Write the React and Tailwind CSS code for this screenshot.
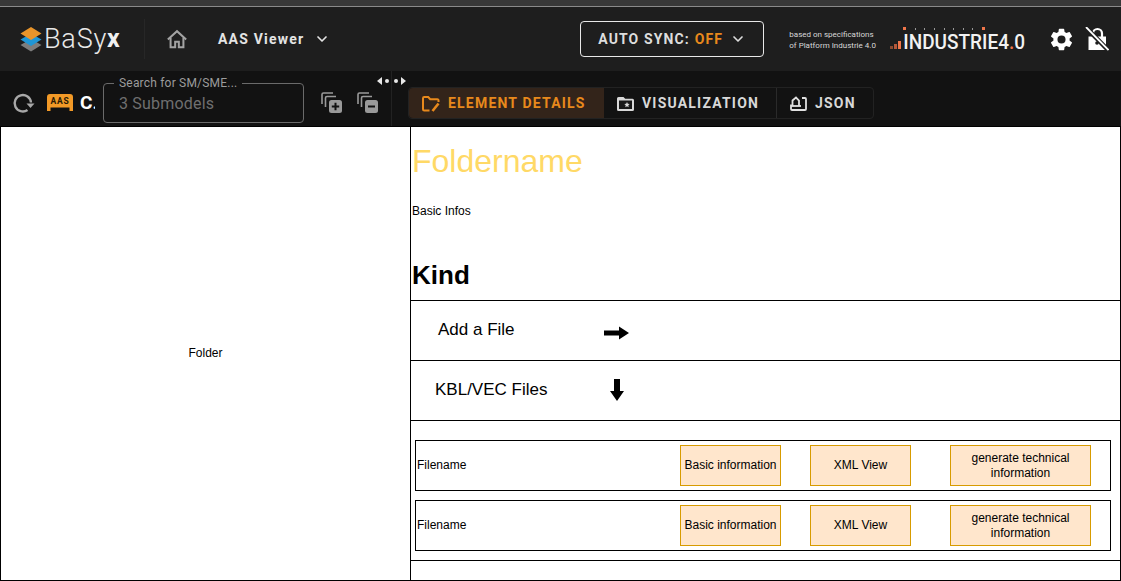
import React from "react";
import { ChevronDown } from "lucide-react";

function LogoMark() {
  return (
    <svg width="22" height="25" viewBox="0 0 22 25" className="shrink-0">
      <path d="M11 12 L21.500 18 L11 24.500 L0.500 18Z" fill="#7d7d7d" />
      <path d="M11 6.500 L21.500 12.500 L11 19 L0.500 12.500Z" fill="#1f96d6" />
      <path d="M11 0 L21.500 6.500 L11 13 L0.500 6.500Z" fill="#e8942a" />
    </svg>
  );
}

function Home() {
  return (
    <svg width="22" height="22" viewBox="0 0 24 24" fill="none" stroke="#a3a3a3" strokeWidth="2.2">
      <path d="M2 12.500 12 3.500l10 9" />
      <path d="M5 10.500V21h5v-6h4v6h5V10.500" />
    </svg>
  );
}

function Gear() {
  return (
    <svg width="27" height="27" viewBox="0 0 24 24" fill="#fff">
      <path d="M19.140 12.940c.04-.3.06-.61.06-.94s-.02-.64-.07-.94l2.030-1.580a.49.49 0 0 0 .12-.61l-1.920-3.320a.49.49 0 0 0-.59-.22l-2.390.96a7 7 0 0 0-1.620-.94l-.36-2.540a.48.48 0 0 0-.48-.41h-3.840a.48.48 0 0 0-.47.41l-.36 2.540c-.59.24-1.130.57-1.620.94l-2.390-.96a.48.48 0 0 0-.59.22L2.740 8.870a.48.48 0 0 0 .12.61l2.030 1.580c-.05.3-.09.63-.09.94s.02.64.07.94l-2.030 1.580a.49.49 0 0 0-.12.61l1.920 3.320c.12.22.37.29.59.22l2.390-.96c.5.38 1.030.7 1.620.94l.36 2.540c.05.24.24.41.48.41h3.840c.24 0 .44-.17.47-.41l.36-2.540c.59-.24 1.130-.56 1.620-.94l2.390.96c.22.08.47 0 .59-.22l1.920-3.320a.48.48 0 0 0-.12-.61l-2.010-1.580zM12 15.600A3.600 3.600 0 1 1 12 8.400a3.600 3.600 0 0 1 0 7.200z" />
    </svg>
  );
}

function LockOff() {
  return (
    <svg width="24" height="24" viewBox="0 0 24 24">
      <path d="M8 10V6.500a4.500 4.500 0 0 1 9 0V10" fill="none" stroke="#fff" strokeWidth="2.200" />
      <path d="M3.500 9.500h17.500V23H3.500z" fill="#fff" />
      <circle cx="12" cy="16" r="1.800" fill="#1e1e1e" />
      <path d="M1 0.500 24 24" stroke="#1e1e1e" strokeWidth="4.500" />
      <path d="M1 0 23.500 23" stroke="#fff" strokeWidth="1.800" />
    </svg>
  );
}

function Refresh() {
  return (
    <svg width="24" height="24" viewBox="0 0 24 24" fill="none" stroke="#a8a8a8" strokeWidth="2.400">
      <path d="M20 11.500A8.200 8.200 0 1 0 16.500 19" />
      <path d="M15.500 12.500h8l-4 4.500z" fill="#a8a8a8" stroke="none" />
    </svg>
  );
}

function AasBadge() {
  return (
    <svg width="26" height="17" viewBox="0 0 26 17">
      <path d="M3 0h20a3 3 0 0 1 3 3v14h-3.500v-3.500h-19V17H0V3a3 3 0 0 1 3-3z" fill="#f39a27" />
      <text x="13" y="10" textAnchor="middle" fontSize="8.500" fontWeight="700" letterSpacing="0.8" fill="#2a1a05" fontFamily="Roboto, sans-serif">AAS</text>
    </svg>
  );
}

function Stack({ minus }) {
  return (
    <svg width="22" height="22" viewBox="0 0 22 22" fill="none" stroke="#9a9a9a" strokeWidth="1.600">
      <path d="M1 12V2.500A1.500 1.500 0 0 1 2.500 1H12" />
      <path d="M4.500 15V6A1.500 1.500 0 0 1 6 4.500h9" />
      <rect x="8" y="8" width="13" height="13" rx="2.500" fill="#9a9a9a" stroke="none" />
      {minus ? (
        <path d="M11 14.500h7" stroke="#121212" strokeWidth="2" />
      ) : (
        <path d="M10.800 14.500h7.400M14.500 10.800v7.400" stroke="#121212" strokeWidth="2" />
      )}
    </svg>
  );
}

function FolderEdit() {
  return (
    <svg width="18" height="16" viewBox="0 0 18 16" fill="none" stroke="#e8891c" strokeWidth="2">
      <path d="M7.500 14.500H2.200A1.200 1.200 0 0 1 1 13.300V2.200A1.200 1.200 0 0 1 2.200 1h4l2 2.200h7A1.200 1.200 0 0 1 16.500 4.400V6" />
      <path d="M16.500 7.500 10.500 15" strokeWidth="2.600" />
    </svg>
  );
}

function FolderStar() {
  return (
    <svg width="17" height="14" viewBox="0 0 17 14">
      <path d="M1.500 0h5l1.700 1.800h7.300A1.500 1.500 0 0 1 17 3.300V12.500a1.500 1.500 0 0 1-1.500 1.500h-14A1.500 1.500 0 0 1 0 12.500v-11A1.500 1.500 0 0 1 1.500 0z" fill="#d8d8d8" />
      <path d="M2 3.500h13V12H2z" fill="#181818" />
      <path d="M10 5l.8 1.800 1.900.2-1.400 1.300.4 1.900-1.700-1-1.700 1 .4-1.900L7.300 7l1.900-.2z" fill="#d8d8d8" />
    </svg>
  );
}

function JsonIcon() {
  return (
    <svg width="17" height="15" viewBox="0 0 17 15" fill="none" stroke="#e0e0e0" strokeWidth="1.800">
      <path d="M1 8.500v4.500A1 1 0 0 0 2 14h13a1 1 0 0 0 1-1V3a1 1 0 0 0-1-1h-3" />
      <path d="M2.500 10V4.500L6 1.500l3 3V10" />
      <path d="M1 10h10" />
    </svg>
  );
}

function Industrie() {
  return (
    <div className="flex items-end h-[24px] ml-[15px] mt-[4px]">
      <div className="flex items-end gap-[1px] mb-[4px] mr-[2px]">
        <span className="block w-[3px] h-[3px] bg-[#8a4a30]" />
        <span className="block w-[3px] h-[5px] bg-[#b5583a]" />
        <span className="block w-[3px] h-[8px] bg-[#f0764a]" />
      </div>
      <div className="relative">
        <span className="absolute -top-[4px] left-0 right-[40px] flex justify-between items-center">
          <span className="block w-[3px] h-[3px] bg-[#f0764a]" />
          {"LATTFOR".split("").map((c, i) => (
            <span key={i} className="block w-[1px] h-[2px] bg-[#999999]" />
          ))}
          <span className="block w-[3px] h-[3px] bg-[#f0764a]" />
        </span>
        <span className="block font-['Roboto',sans-serif] font-medium text-[19px] leading-[22px] text-[#f2f2f2] whitespace-nowrap scale-y-[1.1]">
          INDUSTRIE4<span className="text-[#f0764a]">.</span>0
        </span>
      </div>
    </div>
  );
}

function FileRow() {
  return (
    <div className="h-[51px] ml-[4px] mr-[9px] border border-black flex items-center text-[12px] leading-[15px] text-black">
      <span className="w-[264px] pl-[1px] shrink-0">Filename</span>
      <div className="w-[101px] h-[41px] shrink-0 border border-[#d79b00] bg-[#ffe6cc] flex items-center justify-center text-center whitespace-nowrap">Basic information</div>
      <div className="w-[101px] h-[41px] ml-[29px] shrink-0 border border-[#d79b00] bg-[#ffe6cc] flex items-center justify-center text-center">XML View</div>
      <div className="w-[141px] h-[41px] ml-[39px] shrink-0 border border-[#d79b00] bg-[#ffe6cc] flex items-center justify-center text-center">generate technical<br />information</div>
    </div>
  );
}

export default function App() {
  return (
    <div className="w-[1121px] h-[581px] overflow-hidden flex flex-col bg-white font-['Liberation_Sans',Arial,sans-serif]">
      <div className="h-[7px] bg-[#383838] border-b border-[#8a8a8a] shrink-0" />
      <header className="h-[64px] shrink-0 bg-[#1e1e1e] flex items-center font-['Roboto',sans-serif]">
        <div className="ml-[20px] w-[125px] h-[40px] flex items-center border-r border-[#272727]">
          <LogoMark />
          <span className="ml-[2px] text-[27px] leading-[30px] font-light text-[#e8e8e8] tracking-[0.8px]">BaSy</span>
          <span className="text-[25px] leading-[30px] font-bold text-[#f0f0f0]">x</span>
        </div>
        <div className="ml-[21px]"><Home /></div>
        <span className="ml-[30px] text-[14px] font-bold text-[#e4e4e4] tracking-[1.2px] whitespace-nowrap">AAS Viewer</span>
        <ChevronDown size={16} strokeWidth={2.5} color="#e4e4e4" className="ml-[10px]" />
        <div className="ml-[250px] w-[184px] h-[36px] rounded-[4px] border border-[#e8e8e8] flex items-center pl-[17px] text-[14px] font-bold tracking-[1.1px] text-[#dddddd] whitespace-nowrap">
          AUTO SYNC:<span className="ml-[5px] text-[#e8891c]">OFF</span>
          <ChevronDown size={16} strokeWidth={2.5} color="#dddddd" className="ml-[7px]" />
        </div>
        <div className="ml-[25px] mt-[2px] w-[86px] text-[8px] leading-[11px] font-normal text-[#d8d8d8] whitespace-nowrap">
          based on specifications<br />of Platform Industrie 4.0
        </div>
        <Industrie />
        <div className="ml-[23px] flex items-center"><Gear /></div>
        <div className="ml-[10px] flex items-center"><LockOff /></div>
      </header>
      <div className="h-[55px] shrink-0 bg-[#121212] flex font-['Roboto',sans-serif] relative">
        <div className="w-[392px] shrink-0 flex items-center border-r border-[#222222] pt-[9px]">
          <div className="ml-[11px]"><Refresh /></div>
          <div className="ml-[12px] mt-[-2px]"><AasBadge /></div>
          <span className="ml-[7px] w-[15px] text-[19px] font-bold text-white overflow-hidden whitespace-nowrap">C.</span>
          <div className="ml-[8px] relative w-[201px] h-[40px] rounded-[4px] border border-[#6a6a6a] flex items-center pl-[15px] pt-[1px] text-[16px] text-[#6f6f6f] tracking-[0.2px]">
            3 Submodels
            <span className="absolute -top-[8px] left-[10px] px-[5px] bg-[#121212] text-[12px] leading-[14px] text-[#9c9c9c] whitespace-nowrap">Search for SM/SME...</span>
          </div>
          <div className="ml-[17px]"><Stack /></div>
          <div className="ml-[14px]"><Stack minus /></div>
        </div>
        <div className="absolute left-[377px] top-[6px] flex items-center h-[8px]">
          <span className="block w-0 h-0 border-y-[4px] border-y-transparent border-r-[5px] border-r-[#e8e8e8]" />
          <span className="block w-[4px] h-[4px] rounded-full bg-[#e8e8e8] ml-[3px]" />
          <span className="block w-[4px] h-[4px] rounded-full bg-[#e8e8e8] ml-[5px]" />
          <span className="block w-0 h-0 ml-[3px] border-y-[4px] border-y-transparent border-l-[5px] border-l-[#e8e8e8]" />
        </div>
        <div className="ml-[16px] mt-[16px] h-[32px] w-[466px] rounded-[4px] border border-[#222222] flex text-[14px] font-bold tracking-[1.2px] text-[#d8d8d8] whitespace-nowrap">
          <div className="w-[195px] bg-[#33241a] rounded-l-[4px] flex items-center pl-[13px] pt-[1px] text-[#e8891c]">
            <FolderEdit />
            <span className="ml-[8px]">ELEMENT DETAILS</span>
          </div>
          <div className="w-[173px] border-r border-[#2a2a2a] flex items-center pl-[13px] pt-[1px]">
            <FolderStar />
            <span className="ml-[8px]">VISUALIZATION</span>
          </div>
          <div className="flex-1 flex items-center pl-[13px] pt-[1px]">
            <JsonIcon />
            <span className="ml-[8px]">JSON</span>
          </div>
        </div>
      </div>
      <main className="flex-1 min-h-0 flex border border-black text-black">
        <div className="w-[410px] shrink-0 border-r border-black flex items-center justify-center text-[12px] pb-[2px]">
          Folder
        </div>
        <div className="flex-1 min-w-0 flex flex-col">
          <div className="h-[174px] shrink-0 border-b border-black pl-[1px] flex flex-col">
            <div className="h-[67px] flex items-center text-[32px] leading-[36px] text-[#ffd966]">Foldername</div>
            <div className="h-[31px] flex items-center text-[12px] pt-[2px]">Basic Infos</div>
            <div className="h-[75px] flex items-center text-[26px] font-bold pt-[25px]">Kind</div>
          </div>
          <div className="h-[60px] shrink-0 border-b border-black flex items-center text-[17px]">
            <span className="ml-[27px] w-[166px] mt-[-2px]">Add a File</span>
            <svg width="25" height="14" viewBox="0 0 25 14" className="mt-[4px]">
              <path d="M0 4.500h15V0.500L25 7l-10 6.500V9.500H0z" fill="#000" />
            </svg>
          </div>
          <div className="h-[60px] shrink-0 border-b border-black flex items-center text-[17px]">
            <span className="ml-[24px] w-[175px] mt-[-2px] whitespace-nowrap">KBL/VEC Files</span>
            <svg width="14" height="22" viewBox="0 0 14 22" className="-mt-[1px]">
              <path d="M4 0h6v12h4L7 22 0 12h4z" fill="#000" />
            </svg>
          </div>
          <div className="h-[140px] shrink-0 border-b border-black pt-[19px] flex flex-col gap-[9px]">
            <FileRow />
            <FileRow />
          </div>
        </div>
      </main>
    </div>
  );
}
